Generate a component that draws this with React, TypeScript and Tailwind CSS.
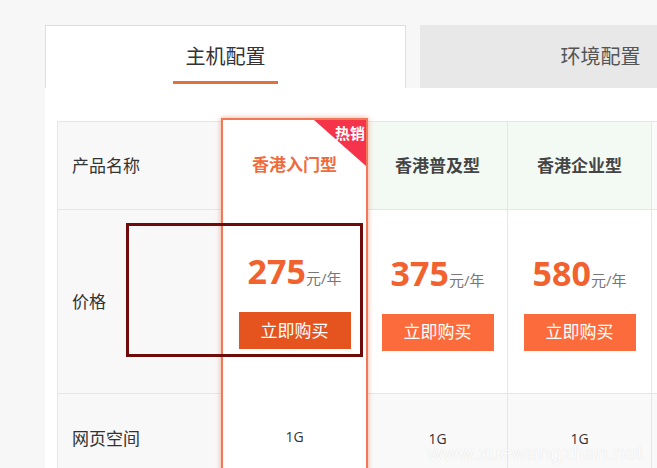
const cjk = { fontFamily: '"Open Sans", "Noto Sans CJK SC", sans-serif' };

type Plan = { name: string; price: string; space: string };

const plans: Plan[] = [
  { name: '香港普及型', price: '375', space: '1G' },
  { name: '香港企业型', price: '580', space: '1G' },
];

function Price({ value }: { value: string }) {
  return (
    <div className="flex items-baseline h-[40px] leading-[40px]">
      <span className="text-[34px] font-bold text-[#f2622e]">{value}</span>
      <span className="text-[15px] text-[#777]">元/年</span>
    </div>
  );
}

function BuyButton({ dark }: { dark?: boolean }) {
  return (
    <button
      className={`mt-[21px] w-[112px] h-[37px] text-[17px] text-white ${dark ? 'bg-[#e5531f]' : 'bg-[#fc6b3c]'}`}
    >
      立即购买
    </button>
  );
}

export default function App() {
  return (
    <div className="relative w-[657px] h-[468px] overflow-hidden bg-[#f7f7f7] text-[#333]" style={cjk}>
      <div className="pl-[45px] pt-[25px]">
        {/* tabs */}
        <div className="flex">
          <div className="w-[361px] h-[63px] shrink-0 bg-white border border-b-0 border-[#dedede] flex flex-col items-center pt-[17px]">
            <span className="text-[20px] leading-[28px] text-[#333]">主机配置</span>
            <div className="mt-[10px] w-[105px] h-[3px] bg-[#e2703f]" />
          </div>
          <div className="ml-[14px] w-[361px] h-[63px] shrink-0 bg-[#e8e8e8] flex items-center justify-center">
            <span className="text-[20px] leading-[28px] text-[#555]">环境配置</span>
          </div>
        </div>

        {/* panel */}
        <div className="bg-white h-[400px] pl-[12px] pt-[33px]">
          <div className="flex border-t border-[#e6e6e6] w-[700px]">
            {/* label column */}
            <div className="w-[164px] shrink-0 bg-[#f8f8f8] border-l border-[#e6e6e6] text-[17px] text-[#333]">
              <div className="h-[88px] flex items-center pl-[14px] border-b border-[#e6e6e6]">产品名称</div>
              <div className="h-[184px] flex items-center pl-[14px] border-b border-[#e6e6e6]">价格</div>
              <div className="h-[90px] flex items-center pl-[14px] border-b border-[#e6e6e6]">网页空间</div>
            </div>

            {/* featured column */}
            <div className="relative z-10 w-[147px] shrink-0 -mt-[4px] bg-white border-2 border-[#f07a58] shadow-[0_0_5px_rgba(240,100,60,0.55)]">
              <div className="h-[90px] flex items-center justify-center text-[17px] font-bold text-[#f06a3c]">
                香港入门型
              </div>
              <div className="h-[184px] flex flex-col items-center justify-center pb-[4px]">
                <Price value="275" />
                <BuyButton dark />
              </div>
              <div className="h-[90px] flex items-center justify-center pb-[6px] text-[14px] text-[#333]">1G</div>
              <svg className="absolute top-0 right-0" width="52" height="46" viewBox="0 0 52 46">
                <polygon points="0,0 52,0 52,46" fill="#f5334b" />
              </svg>
              <span className="absolute top-[4px] right-[1px] text-[15px] leading-[18px] font-bold text-white">热销</span>
            </div>

            {plans.map((p, i) => (
              <div
                key={p.name}
                className={`shrink-0 border-r border-[#e6e6e6] ${i === 0 ? 'w-[140px]' : 'w-[144px]'}`}
              >
                <div className="h-[88px] flex items-center justify-center bg-[#f3f9f3] border-b border-[#e6e6e6] text-[17px] font-bold text-[#444]">
                  {p.name}
                </div>
                <div className="h-[184px] flex flex-col items-center justify-center border-b border-[#e6e6e6]">
                  <Price value={p.price} />
                  <BuyButton />
                </div>
                <div className="h-[90px] flex items-center justify-center bg-[#f9f9f9] border-b border-[#e6e6e6] text-[14px] text-[#333]">
                  {p.space}
                </div>
              </div>
            ))}

            <div className="w-[144px] shrink-0">
              <div className="h-[88px] bg-[#fafafa] border-b border-[#e6e6e6]" />
              <div className="h-[184px] border-b border-[#e6e6e6]" />
              <div className="h-[90px] bg-[#f9f9f9] border-b border-[#e6e6e6]" />
            </div>
          </div>
        </div>
      </div>

      {/* annotation box */}
      <div className="absolute left-[126px] top-[223px] w-[237px] h-[134px] border-[3px] border-[#6e0b0b] z-20" />

      {/* watermark */}
      <div
        className="absolute left-[428px] top-[441px] text-[21px] leading-[24px] text-white/90 z-20 [text-shadow:0_0_1px_rgba(0,0,0,0.15)]"
        style={{ fontFamily: '"Liberation Sans", Arial, sans-serif' }}
      >
        www.xuewangzhan.net
      </div>
    </div>
  );
}
